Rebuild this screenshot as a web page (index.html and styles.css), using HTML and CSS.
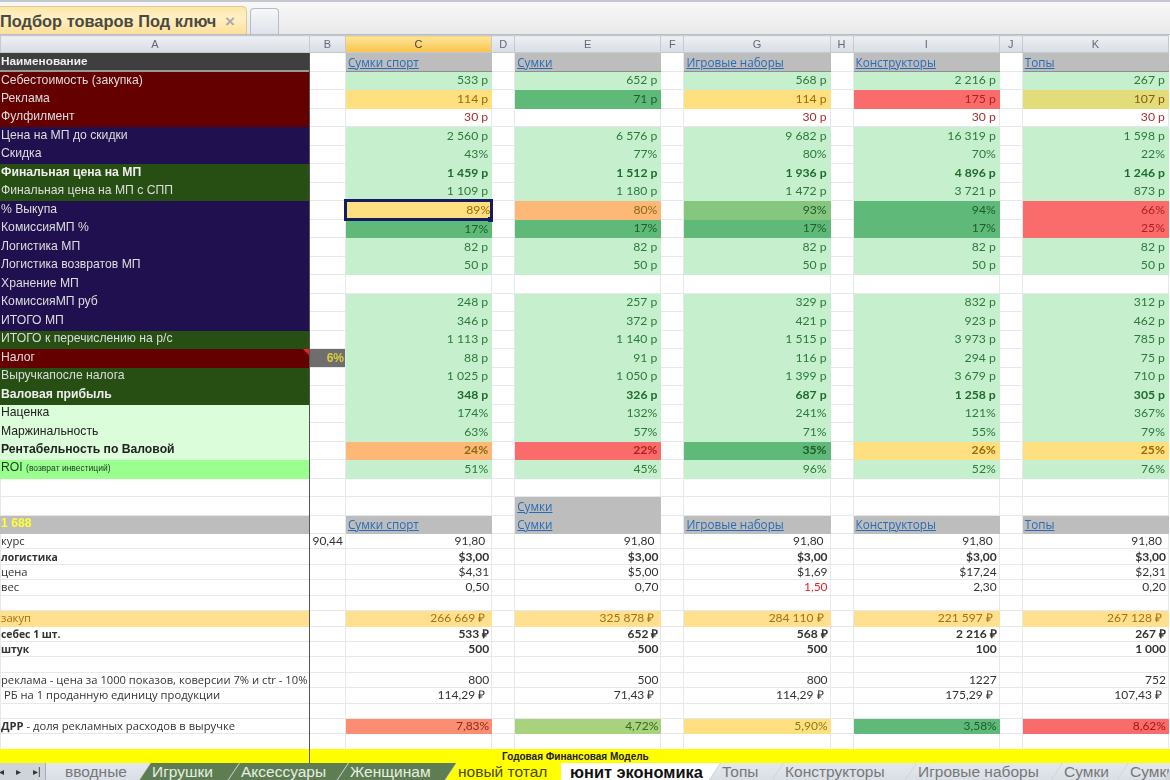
FILE: index.html
```html
<!DOCTYPE html>
<html lang="ru">
<head>
<meta charset="utf-8">
<title>Подбор товаров Под ключ</title>
<link rel="stylesheet" href="styles.css">
</head>
<body>
<div class="app">
<div class="tabbar"><div class="doctab">Подбор товаров Под ключ <span class="close">×</span></div><div class="newtab"></div></div>
<div class="sheet">
<table>
<colgroup><col class="ca"><col class="cb"><col class="cv"><col class="cg"><col class="cv"><col class="cg"><col class="cv"><col class="cg"><col class="cv"><col class="cg"><col class="cv"></colgroup>
<tr class="hd"><th>A</th><th>B</th><th class="sel">C</th><th>D</th><th>E</th><th>F</th><th>G</th><th>H</th><th>I</th><th>J</th><th>K</th></tr>
<tr class="t"><td class="l dk b">Наименование</td><td></td><td class="lnk ln">Сумки спорт</td><td></td><td class="lnk ln">Сумки</td><td></td><td class="lnk ln">Игровые наборы</td><td></td><td class="lnk ln">Конструкторы</td><td></td><td class="lnk ln">Топы</td></tr>
<tr class="t"><td class="l mar">Себестоимость (закупка)</td><td></td><td class="g">533 р</td><td></td><td class="g">652 р</td><td></td><td class="g">568 р</td><td></td><td class="g">2 216 р</td><td></td><td class="g">267 р</td></tr>
<tr class="t"><td class="l mar">Реклама</td><td></td><td class="cy">114 р</td><td></td><td class="cg1">71 р</td><td></td><td class="cy">114 р</td><td></td><td class="cr">175 р</td><td></td><td class="cyg">107 р</td></tr>
<tr class="t"><td class="l mar">Фулфилмент</td><td></td><td class="rd">30 р</td><td></td><td></td><td></td><td class="rd">30 р</td><td></td><td class="rd">30 р</td><td></td><td class="rd">30 р</td></tr>
<tr class="t"><td class="l nav">Цена на МП до скидки</td><td></td><td class="g">2 560 р</td><td></td><td class="g">6 576 р</td><td></td><td class="g">9 682 р</td><td></td><td class="g">16 319 р</td><td></td><td class="g">1 598 р</td></tr>
<tr class="t"><td class="l nav">Скидка</td><td></td><td class="g">43%</td><td></td><td class="g">77%</td><td></td><td class="g">80%</td><td></td><td class="g">70%</td><td></td><td class="g">22%</td></tr>
<tr class="t"><td class="l grn b">Финальная цена на МП</td><td></td><td class="g b">1 459 р</td><td></td><td class="g b">1 512 р</td><td></td><td class="g b">1 936 р</td><td></td><td class="g b">4 896 р</td><td></td><td class="g b">1 246 р</td></tr>
<tr class="t"><td class="l grn">Финальная цена на МП с СПП</td><td></td><td class="g">1 109 р</td><td></td><td class="g">1 180 р</td><td></td><td class="g">1 472 р</td><td></td><td class="g">3 721 р</td><td></td><td class="g">873 р</td></tr>
<tr class="t"><td class="l nav">% Выкупа</td><td></td><td class="cy cur">89%</td><td></td><td class="co">80%</td><td></td><td class="cg2">93%</td><td></td><td class="cg1">94%</td><td></td><td class="cr">66%</td></tr>
<tr class="t"><td class="l nav">КомиссияМП %</td><td></td><td class="cg1">17%</td><td></td><td class="cg1">17%</td><td></td><td class="cg1">17%</td><td></td><td class="cg1">17%</td><td></td><td class="cr">25%</td></tr>
<tr class="t"><td class="l nav">Логистика МП</td><td></td><td class="g">82 р</td><td></td><td class="g">82 р</td><td></td><td class="g">82 р</td><td></td><td class="g">82 р</td><td></td><td class="g">82 р</td></tr>
<tr class="t"><td class="l nav">Логистика возвратов МП</td><td></td><td class="g">50 р</td><td></td><td class="g">50 р</td><td></td><td class="g">50 р</td><td></td><td class="g">50 р</td><td></td><td class="g">50 р</td></tr>
<tr class="t"><td class="l nav">Хранение МП</td><td></td><td></td><td></td><td></td><td></td><td></td><td></td><td></td><td></td><td></td></tr>
<tr class="t"><td class="l nav">КомиссияМП руб</td><td></td><td class="g">248 р</td><td></td><td class="g">257 р</td><td></td><td class="g">329 р</td><td></td><td class="g">832 р</td><td></td><td class="g">312 р</td></tr>
<tr class="t"><td class="l nav">ИТОГО МП</td><td></td><td class="g">346 р</td><td></td><td class="g">372 р</td><td></td><td class="g">421 р</td><td></td><td class="g">923 р</td><td></td><td class="g">462 р</td></tr>
<tr class="t"><td class="l grn">ИТОГО к перечислению на р/с</td><td></td><td class="g">1 113 р</td><td></td><td class="g">1 140 р</td><td></td><td class="g">1 515 р</td><td></td><td class="g">3 973 р</td><td></td><td class="g">785 р</td></tr>
<tr class="t"><td class="l mar tri">Налог</td><td class="tax">6%</td><td class="g">88 р</td><td></td><td class="g">91 р</td><td></td><td class="g">116 р</td><td></td><td class="g">294 р</td><td></td><td class="g">75 р</td></tr>
<tr class="t"><td class="l grn">Выручкапосле налога</td><td></td><td class="g">1 025 р</td><td></td><td class="g">1 050 р</td><td></td><td class="g">1 399 р</td><td></td><td class="g">3 679 р</td><td></td><td class="g">710 р</td></tr>
<tr class="t"><td class="l grn b">Валовая прибыль</td><td></td><td class="g b">348 р</td><td></td><td class="g b">326 р</td><td></td><td class="g b">687 р</td><td></td><td class="g b">1 258 р</td><td></td><td class="g b">305 р</td></tr>
<tr class="t"><td class="l pale">Наценка</td><td></td><td class="g">174%</td><td></td><td class="g">132%</td><td></td><td class="g">241%</td><td></td><td class="g">121%</td><td></td><td class="g">367%</td></tr>
<tr class="t"><td class="l pale">Маржинальность</td><td></td><td class="g">63%</td><td></td><td class="g">57%</td><td></td><td class="g">71%</td><td></td><td class="g">55%</td><td></td><td class="g">79%</td></tr>
<tr class="t"><td class="l pale b">Рентабельность по Валовой</td><td></td><td class="co b">24%</td><td></td><td class="cr b">22%</td><td></td><td class="cg1 b">35%</td><td></td><td class="cy b">26%</td><td></td><td class="cy b">25%</td></tr>
<tr class="t"><td class="l lime">ROI <small>(возврат инвестиций)</small></td><td></td><td class="g">51%</td><td></td><td class="g">45%</td><td></td><td class="g">96%</td><td></td><td class="g">52%</td><td></td><td class="g">76%</td></tr>
<tr class="t"><td></td><td></td><td></td><td></td><td></td><td></td><td></td><td></td><td></td><td></td><td></td></tr>
<tr class="t"><td></td><td></td><td></td><td></td><td class="lnk">Сумки</td><td></td><td></td><td></td><td></td><td></td><td></td></tr>
<tr class="t"><td class="l grey yel">1 688</td><td></td><td class="lnk">Сумки спорт</td><td></td><td class="lnk">Сумки</td><td></td><td class="lnk">Игровые наборы</td><td></td><td class="lnk">Конструкторы</td><td></td><td class="lnk">Топы</td></tr>
<tr class="s"><td>курс</td><td class="n">90,44</td><td class="n pad">91,80</td><td></td><td class="n pad">91,80</td><td></td><td class="n pad">91,80</td><td></td><td class="n pad">91,80</td><td></td><td class="n pad">91,80</td></tr>
<tr class="s"><td class="b">логистика</td><td></td><td class="n b">$3,00</td><td></td><td class="n b">$3,00</td><td></td><td class="n b">$3,00</td><td></td><td class="n b">$3,00</td><td></td><td class="n b">$3,00</td></tr>
<tr class="s"><td>цена</td><td></td><td class="n">$4,31</td><td></td><td class="n">$5,00</td><td></td><td class="n">$1,69</td><td></td><td class="n">$17,24</td><td></td><td class="n">$2,31</td></tr>
<tr class="s"><td>вес</td><td></td><td class="n">0,50</td><td></td><td class="n">0,70</td><td></td><td class="n red">1,50</td><td></td><td class="n">2,30</td><td></td><td class="n">0,20</td></tr>
<tr class="s"><td></td><td></td><td></td><td></td><td></td><td></td><td></td><td></td><td></td><td></td><td></td></tr>
<tr class="s"><td class="sand brn">закуп</td><td></td><td class="n sand brn pad">266 669 ₽</td><td></td><td class="n sand brn pad">325 878 ₽</td><td></td><td class="n sand brn pad">284 110 ₽</td><td></td><td class="n sand brn pad">221 597 ₽</td><td></td><td class="n sand brn pad">267 128 ₽</td></tr>
<tr class="s"><td class="b">себес 1 шт.</td><td></td><td class="n b pad">533 ₽</td><td></td><td class="n b pad">652 ₽</td><td></td><td class="n b pad">568 ₽</td><td></td><td class="n b pad">2 216 ₽</td><td></td><td class="n b pad">267 ₽</td></tr>
<tr class="s"><td class="b">штук</td><td></td><td class="n b pad">500</td><td></td><td class="n b pad">500</td><td></td><td class="n b pad">500</td><td></td><td class="n b pad">100</td><td></td><td class="n b pad">1 000</td></tr>
<tr class="s"><td></td><td></td><td></td><td></td><td></td><td></td><td></td><td></td><td></td><td></td><td></td></tr>
<tr class="s"><td class="over">реклама - цена за 1000 показов, коверсии 7% и ctr - 10%</td><td></td><td class="n">800</td><td></td><td class="n">500</td><td></td><td class="n">800</td><td></td><td class="n">1227</td><td></td><td class="n">752</td></tr>
<tr class="s"><td class="in">РБ на 1 проданную единицу продукции</td><td></td><td class="n pad">114,29 ₽</td><td></td><td class="n pad">71,43 ₽</td><td></td><td class="n pad">114,29 ₽</td><td></td><td class="n pad">175,29 ₽</td><td></td><td class="n pad">107,43 ₽</td></tr>
<tr class="s"><td></td><td></td><td></td><td></td><td></td><td></td><td></td><td></td><td></td><td></td><td></td></tr>
<tr class="s"><td><b>ДРР</b> - доля рекламных расходов в выручке</td><td></td><td class="n d1">7,83%</td><td></td><td class="n d2">4,72%</td><td></td><td class="n cy">5,90%</td><td></td><td class="n cg1">3,58%</td><td></td><td class="n cr">8,62%</td></tr>
<tr class="s"><td></td><td></td><td></td><td></td><td></td><td></td><td></td><td></td><td></td><td></td><td></td></tr>
</table>
<div class="fin">Годовая Финансовая Модель</div>
<div class="handle"></div>
</div>
<div class="tabs">
<div class="nav-ar"><span>◂</span><span>▸</span><span>▸|</span></div>
<div class="st first">вводные</div>
<div class="st gr">Игрушки</div>
<div class="st gr">Аксессуары</div>
<div class="st gr">Женщинам</div>
<div class="st ye">новый тотал</div>
<div class="st on">юнит экономика</div>
<div class="st">Топы</div>
<div class="st">Конструкторы</div>
<div class="st">Игровые наборы</div>
<div class="st">Сумки</div>
<div class="st">Сумки</div>
</div>
</div>
</body>
</html>
```
FILE: styles.css
```css
html,body{margin:0;padding:0;background:#fff;overflow:hidden}
.app{width:1170px;height:780px;overflow:hidden;display:flex;flex-direction:column;font-family:"Liberation Sans",Arial,sans-serif;filter:blur(.45px)}
.tabbar{height:35px;flex:none;box-sizing:border-box;background:linear-gradient(#f8f8f8,#e9e9e9);border-top:2px solid #c4c7d0;border-bottom:1px solid #b8bcc4;display:flex;align-items:flex-end;gap:3px}
.doctab{height:28px;width:247px;box-sizing:border-box;background:linear-gradient(#fde6a8,#fff0c4 40%,#ffdf9a);border:1px solid #e0c98f;border-left:0;border-bottom:0;border-radius:0 5px 0 0;font-size:16.4px;font-weight:700;color:#4a4a40;line-height:29px;white-space:nowrap}
.close{color:#aaa;font-size:17px;margin-left:4px;font-weight:700}
.newtab{width:29px;height:26px;box-sizing:border-box;background:linear-gradient(#f6f7f9,#dfe3ea);border:1px solid #b7bcc6;border-bottom:0;border-radius:4px 4px 0 0}
.sheet{flex:1;position:relative;overflow:hidden}
.sheet::after{content:"";position:absolute;left:309px;top:18px;bottom:0;width:1px;background:#555}
table{border-collapse:collapse;table-layout:fixed;width:1168px}
.ca{width:309px}.cb{width:36px}.cv{width:146.2px}.cg{width:23px}
td,th{padding:0;border:1px solid #e6e8ec;overflow:hidden;white-space:nowrap;box-sizing:border-box}
.hd th{height:17px;background:linear-gradient(#edf0f4,#d8dde4);font-weight:400;font-size:11px;line-height:15px;color:#667;border-color:#c5cad2}
.hd .sel{background:linear-gradient(#fee59a,#fbc34a);color:#444}
.t td{height:18.5px;font-family:Lato,"Liberation Sans",sans-serif;font-size:12.2px;line-height:14px;vertical-align:middle;text-align:right;color:#2c7a3a;padding-right:3px}
.t td.l{font-family:"Liberation Sans",Arial,sans-serif;text-align:left;padding:0 0 1px;color:#ddd;line-height:13px}
.b{font-weight:700}
.t td.b{color:#1f6b2c}
.t td.l.b{color:#eee}
.t td.dk{background:#3f3f3f;color:#fff;border-color:#3f3f3f;border-bottom:2px solid #999;font-size:11.8px}
.t td.mar{background:#640000;border-color:#640000}
.t td.nav{background:#20104f;border-color:#20104f}
.t td.grn{background:#274e13;border-color:#274e13}
.t td.pale,.t td.pale.b{background:#dcfdd9;border-color:#dcfdd9;color:#222}
.t td.lime{background:#99ff8f;border-color:#99ff8f;color:#1a3a1a}
small{font-size:8.5px}
.t td.grey{background:#bdbdbd;border-color:#bdbdbd}
.t td.yel,.t td.yel.b{color:#ffff33;font-weight:700}
.t td.lnk{background:#bdbdbd;text-align:left;font-family:"Open Sans","Liberation Sans",sans-serif;font-size:11.7px;color:#2a6bb8;text-decoration:underline;padding:1px 0 0 2px;line-height:13px;border-color:#bdbdbd}
.t td.ln{border-bottom-color:#8f8f8f}
.t .g{background:#c6efce;border-color:#c6efce}
.t .rd{color:#a83030}
.t .cy,.t td.cy.b{background:#ffe080;color:#9c6a08;border-color:#ffe080}
.t .co,.t td.co.b{background:#fdb777;color:#8a6a10;border-color:#fdb777}
.t .cr,.t td.cr.b{background:#fa6b6b;color:#b02020;border-color:#fa6b6b}
.t .cg1,.t td.cg1.b{background:#5fba7a;color:#1d5c2c;border-color:#5fba7a}
.t .cg2{background:#85c77e;color:#1d5c2c;border-color:#85c77e}
.t .cyg{background:#e2dc7a;color:#8a5a10;border-color:#e2dc7a}
.t td.cur{border:3px solid #171b63;padding-right:0}
.t td.tax{font-family:"Liberation Sans",Arial,sans-serif;font-size:12px;background:#6e6e6e;color:#d8cf3a;font-weight:700;padding-right:1px}
.tri{position:relative}
.tri::after{content:"";position:absolute;top:0;right:0;border-style:solid;border-width:0 6px 6px 0;border-color:transparent #f02020 transparent transparent}
.handle{position:absolute;left:488px;top:182px;width:5px;height:5px;background:#171b63}
.s td{height:15.43px;font-family:"Open Sans","Liberation Sans",sans-serif;font-size:11.2px;line-height:14px;color:#333;padding:0}
.s td.b{font-size:10.4px}
.s .n,.s td.n.b{font-family:Lato,"Liberation Sans",sans-serif;font-size:12px;text-align:right;padding-right:2px}
.s .n.pad{padding-right:6px}
.s .red{color:#e8222a}
.s .sand{background:#ffe08f;border-color:#ffe08f}
.s .brn{color:#a8700f}
.s .over{overflow:visible;position:relative}
.s .in{padding-left:3px}
.s .d1{background:#fb8d73;color:#8a2a1a;border-color:#fb8d73}
.s .d2{background:#a9d27f;color:#3a6a1a;border-color:#a9d27f}
.s .cy{background:#ffe080;border-color:#ffe080;color:#8a7a18}
.s .cg1{background:#5fba7a;border-color:#5fba7a;color:#1d5c2c}
.s .cr{background:#fa6b6b;border-color:#fa6b6b;color:#a01818}
.fin{position:absolute;left:0;right:0;bottom:0;height:14px;background:#ffff00;font-size:10px;font-weight:700;line-height:15px;color:#222;padding-left:502px}
.tabs{height:17px;flex:none;display:grid;grid-template-columns:46px 104px 89px 109px 108px 116px 148px 63px 133px 146px 66px 1fr;background:#cfd4db;font-size:15.5px;line-height:18px;color:#777;white-space:nowrap;overflow:hidden}
.nav-ar{display:flex;gap:12px;font-size:10px;color:#333;box-sizing:border-box;margin-left:-1px;border-right:1px solid #aab}
.st{padding:0 0 0 13px;margin-left:-11px;background:linear-gradient(#e4e8ee,#d9dee5);clip-path:polygon(12px 0,100% 0,calc(100% - 12px) 100%,0 100%)}
.first{padding-left:19px;margin-left:0;clip-path:polygon(0 0,100% 0,calc(100% - 12px) 100%,0 100%)}
.gr{background:#5e7d52;color:#e7efe3}
.ye{background:#ffff00;color:#4a4a00}
.on{background:#fff;color:#111;font-weight:700;font-size:16.4px;padding-left:9px;clip-path:polygon(0 0,100% 0,calc(100% - 12px) 100%,0 100%);z-index:1}
```
